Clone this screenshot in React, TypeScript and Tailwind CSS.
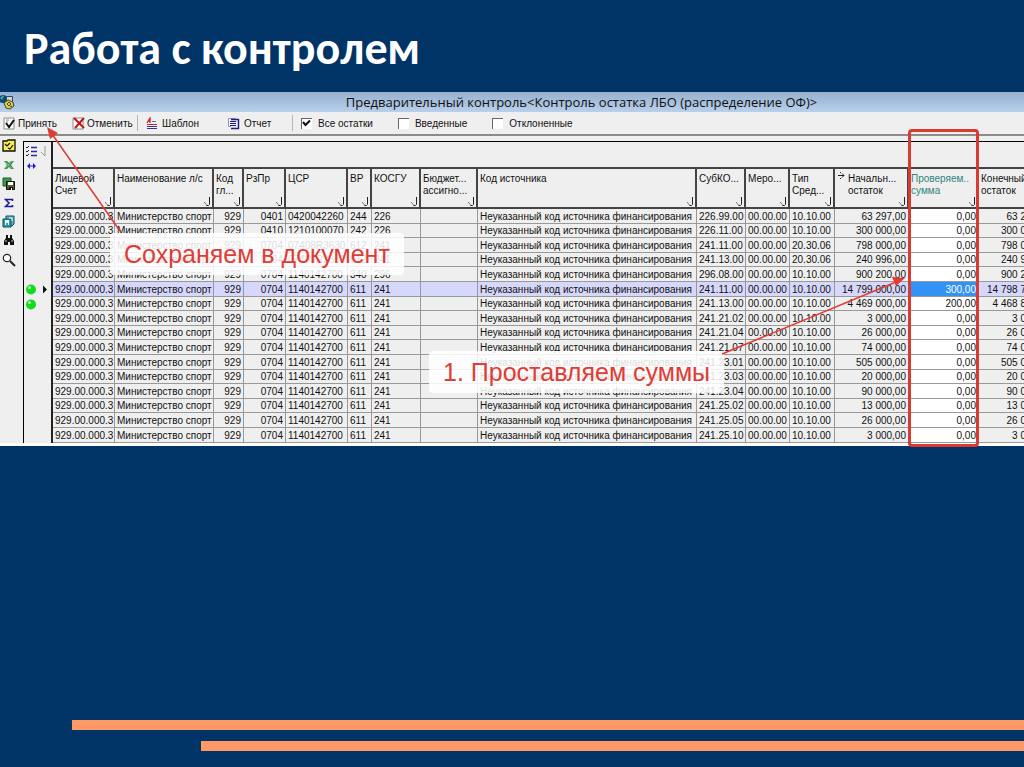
import type { ReactNode } from "react"
import clsx from "clsx"

type Column = {
  label: string[]
  width: string
  align?: "right"
  sorted?: boolean
  accent?: boolean
}

const columns: Column[] = [
  { label: ["Лицевой", "Счет"], width: "w-[62px]" },
  { label: ["Наименование л/с"], width: "w-[99px]" },
  { label: ["Код", "гл..."], width: "w-[30px]", align: "right" },
  { label: ["РзПр"], width: "w-[42px]", align: "right" },
  { label: ["ЦСР"], width: "w-[62px]" },
  { label: ["ВР"], width: "w-[24px]" },
  { label: ["КОСГУ"], width: "w-[49px]" },
  { label: ["Бюджет...", "ассигно..."], width: "w-[57px]" },
  { label: ["Код источника"], width: "w-auto" },
  { label: ["СубКО..."], width: "w-[49px]" },
  { label: ["Меро..."], width: "w-[44px]" },
  { label: ["Тип", "Сред..."], width: "w-[45px]" },
  { label: ["Начальн...", "остаток"], width: "w-[74px]", align: "right", sorted: true },
  { label: ["Проверяем..", "сумма"], width: "w-[70px]", align: "right", accent: true },
  { label: ["Конечный", "остаток"], width: "w-[75px]", align: "right" },
]

const account = "929.00.000.3"
const ministry = "Министерство спорт"
const source = "Неуказанный код источника финансирования"

// section, target item, expense type, KOSGU, sub code, fund type, opening, checked, closing
const records = [
  ["0401", "0420042260", "244", "226", "226.99.00", "10.10.00", "63 297,00", "0,00", "63 297,00"],
  ["0410", "1210100070", "242", "226", "226.11.00", "10.10.00", "300 000,00", "0,00", "300 000,00"],
  ["0704", "07408R3630", "612", "241", "241.11.00", "20.30.06", "798 000,00", "0,00", "798 000,00"],
  ["0704", "07408R3630", "612", "241", "241.13.00", "20.30.06", "240 996,00", "0,00", "240 996,00"],
  ["0704", "1140142700", "340", "296", "296.08.00", "10.10.00", "900 200,00", "0,00", "900 200,00"],
  ["0704", "1140142700", "611", "241", "241.11.00", "10.10.00", "14 799 000,00", "300,00", "14 798 700,00"],
  ["0704", "1140142700", "611", "241", "241.13.00", "10.10.00", "4 469 000,00", "200,00", "4 468 800,00"],
  ["0704", "1140142700", "611", "241", "241.21.02", "10.10.00", "3 000,00", "0,00", "3 000,00"],
  ["0704", "1140142700", "611", "241", "241.21.04", "10.10.00", "26 000,00", "0,00", "26 000,00"],
  ["0704", "1140142700", "611", "241", "241.21.07", "10.10.00", "74 000,00", "0,00", "74 000,00"],
  ["0704", "1140142700", "611", "241", "241.23.01", "10.10.00", "505 000,00", "0,00", "505 000,00"],
  ["0704", "1140142700", "611", "241", "241.23.03", "10.10.00", "20 000,00", "0,00", "20 000,00"],
  ["0704", "1140142700", "611", "241", "241.23.04", "10.10.00", "90 000,00", "0,00", "90 000,00"],
  ["0704", "1140142700", "611", "241", "241.25.02", "10.10.00", "13 000,00", "0,00", "13 000,00"],
  ["0704", "1140142700", "611", "241", "241.25.05", "10.10.00", "26 000,00", "0,00", "26 000,00"],
  ["0704", "1140142700", "611", "241", "241.25.10", "10.10.00", "3 000,00", "0,00", "3 000,00"],
]

const rows = records.map(([section, item, type, kosgu, sub, fund, opening, checked, closing]) => [
  account, ministry, "929", section, item, type, kosgu, "", source, sub, "00.00.00", fund, opening, checked, closing,
])

const SELECTED = 5

function AppIcon() {
  return (
    <svg width="15" height="16" viewBox="0 0 15 16" aria-hidden="true">
      <circle cx="3" cy="5" r="4" fill="#12427e" />
      <path d="M0 4l3-3 1 2-2 3z" fill="#2fae8b" />
      <path d="M6.500 2.500h6v7h-6z" fill="#cfd6e0" stroke="#3b4654" />
      <path d="M4 9l4-3 5 2 1 4-4 3-4-1z" fill="#d9cf4b" stroke="#4b4720" />
      <path d="M7 10l2-2 2 2-2 2zM10 13l2-1" stroke="#4b4720" fill="none" />
    </svg>
  )
}

function AcceptIcon() {
  return (
    <svg width="13" height="13" viewBox="0 0 13 13" aria-hidden="true">
      <path d="M1 1h10v11H1z" fill="#fff" stroke="#8a8a8a" />
      <path d="M3 3h3M3 5h2" stroke="#8a8a8a" />
      <path d="M3 6l3 4 5-7" fill="none" stroke="#111" strokeWidth="2" />
    </svg>
  )
}

function CancelIcon() {
  return (
    <svg width="13" height="13" viewBox="0 0 13 13" aria-hidden="true">
      <path d="M1 1h10v11H1z" fill="#fff" stroke="#8a8a8a" />
      <path d="M2 1l10 10M12 1L3 11" stroke="#c3141c" strokeWidth="2" />
    </svg>
  )
}

function TemplateIcon() {
  return (
    <svg width="12" height="13" viewBox="0 0 12 13" aria-hidden="true">
      <path d="M1 6l3-5v5M2 4h2" fill="none" stroke="#d8222a" strokeWidth="1.3" />
      <path d="M6 4.5h4" stroke="#6d6d9a" />
      <path d="M1 7.5h10" stroke="#d8222a" />
      <path d="M1 9.5h10M1 11.5h10" stroke="#3434a0" />
    </svg>
  )
}

function ReportIcon() {
  return (
    <svg width="13" height="13" viewBox="0 0 13 13" aria-hidden="true">
      <path d="M1.500 1.500h7v8h-7z" fill="#fff" stroke="#8f8fb8" />
      <path d="M4 2.500h7.500v9H4" fill="#e9e9fa" stroke="#20207c" strokeWidth="1.400" />
      <path d="M3 4.500h6M3 6.500h6M3 8.500h6" stroke="#20207c" />
    </svg>
  )
}

function ChecklistIcon() {
  return (
    <svg width="14" height="13" viewBox="0 0 14 13" aria-hidden="true">
      <path d="M1 2h4l1-1h7v11H1z" fill="#f5f04a" stroke="#111" strokeWidth="1.3" />
      <path d="M3 5l2 2 3-3M6 9l2 1 3-4" fill="none" stroke="#111" strokeWidth="1.2" />
    </svg>
  )
}

function ExcelIcon() {
  return (
    <svg width="12" height="10" viewBox="0 0 12 10" aria-hidden="true">
      <path d="M1 1h3l2 2 2-2h3L8 5l3 4H8L6 7 4 9H1l3-4z" fill="#2f8f45" />
      <path d="M2 1.500l7 7M9 1.500l-7 7" stroke="#bfe5c6" strokeWidth="0.6" />
    </svg>
  )
}

function SaveIcon() {
  return (
    <svg width="14" height="14" viewBox="0 0 14 14" aria-hidden="true">
      <path d="M1 1h8v8H1z" fill="#3b9c4c" stroke="#1c5a28" />
      <path d="M4.500 4.500h8v8h-8z" fill="#55602a" stroke="#111" />
      <path d="M6 5h5v3H6z" fill="#fff" />
      <path d="M7 10h4v3H7z" fill="#111" />
      <path d="M9 11h1v2H9z" fill="#fff" />
    </svg>
  )
}

function SumIcon() {
  return (
    <svg width="10" height="10" viewBox="0 0 10 10" aria-hidden="true">
      <path d="M8.500 3V1.500H1.500L5 5 1.500 8.500h7V7" fill="none" stroke="#1a1a96" strokeWidth="1.500" />
    </svg>
  )
}

function CopyIcon() {
  return (
    <svg width="13" height="13" viewBox="0 0 13 13" aria-hidden="true">
      <path d="M4 1h8v8l-2 2H4z" fill="#58b9c4" stroke="#134d58" />
      <path d="M1 4h8v8H1z" fill="#2f9db0" stroke="#134d58" />
      <path d="M3 5v5h1V8h2v2h1V5" fill="#e8fbff" />
      <path d="M7 3h3v3" fill="none" stroke="#e8fbff" />
    </svg>
  )
}

function FindIcon() {
  return (
    <svg width="12" height="11" viewBox="0 0 12 11" aria-hidden="true">
      <path d="M3 0h2v3h2V0h2v3l2 3v4H7V7H5v3H1V6l2-3z" fill="#111" />
      <path d="M3 5v2M9 5v2" stroke="#eee" strokeWidth="0.8" />
    </svg>
  )
}

function MagnifierIcon() {
  return (
    <svg width="14" height="14" viewBox="0 0 14 14" aria-hidden="true">
      <circle cx="5" cy="5" r="3.700" fill="#fff" stroke="#222" strokeWidth="1.200" />
      <path d="M8 8l5 5" stroke="#222" strokeWidth="2" />
    </svg>
  )
}

function FilterMark() {
  return (
    <svg width="8" height="10" viewBox="0 0 8 10" className="absolute right-px bottom-0" aria-hidden="true">
      <path d="M1 5l3 3.500" stroke="#777" fill="none" />
      <path d="M6.500 0v7.500L5.500 8.500H3.500" stroke="#222" fill="none" />
    </svg>
  )
}

function ToolButton({ icon, children, className }: { icon: ReactNode; children: ReactNode; className?: string }) {
  return (
    <button type="button" className={clsx("flex items-center gap-0.5", className)}>
      {icon}
      {children}
    </button>
  )
}

function CheckOption({ id, label, checked }: { id: string; label: string; checked?: boolean }) {
  return (
    <div className="flex items-center gap-1.5">
      <span className="relative flex h-[11px] w-[11px]">
        <input
          id={id}
          type="checkbox"
          defaultChecked={checked}
          className="peer h-[11px] w-[11px] appearance-none border-t border-l border-[#666] bg-white"
        />
        <svg
          width="9"
          height="9"
          viewBox="0 0 9 9"
          className="pointer-events-none absolute top-px left-px hidden peer-checked:block"
          aria-hidden="true"
        >
          <path d="M1 3l2.500 3L8 1.500" fill="none" stroke="#111" strokeWidth="2" />
        </svg>
      </span>
      <label htmlFor={id}>{label}</label>
    </div>
  )
}

const sideTools = [
  { label: "Отметить", icon: <ChecklistIcon /> },
  { label: "Excel", icon: <ExcelIcon /> },
  { label: "Сохранить", icon: <SaveIcon /> },
  { label: "Сумма", icon: <SumIcon /> },
  { label: "Копировать", icon: <CopyIcon /> },
  { label: "Найти", icon: <FindIcon /> },
  { label: "Просмотр", icon: <MagnifierIcon /> },
]

function Toolbar() {
  return (
    <div className="flex h-6 items-center border-b-2 border-[#8c8c8c] pl-[3px] whitespace-nowrap">
      <ToolButton icon={<AcceptIcon />} className="w-[69px]">Принять</ToolButton>
      <ToolButton icon={<CancelIcon />} className="w-[65px]">Отменить</ToolButton>
      <div className="h-4 w-px bg-[#b5b5b5]" />
      <ToolButton icon={<TemplateIcon />} className="ml-2 w-[81px] gap-1">Шаблон</ToolButton>
      <ToolButton icon={<ReportIcon />} className="w-[65px] gap-1">Отчет</ToolButton>
      <div className="mr-2 h-4 w-px bg-[#b5b5b5]" />
      <div className="flex gap-[25px]">
        <CheckOption id="all" label="Все остатки" checked />
        <CheckOption id="entered" label="Введенные" />
        <CheckOption id="rejected" label="Отклоненные" />
      </div>
    </div>
  )
}

function BalanceTable() {
  return (
    <table className="w-[calc(100%+30px)] table-fixed border-separate border-spacing-0 border-t border-l border-black">
      <colgroup>
        <col className="w-[29px]" />
        {columns.map((column) => (
          <col key={column.label[0]} className={column.width} />
        ))}
      </colgroup>
      <thead>
        <tr>
          <th rowSpan={2} className="border-r-2 border-[#222] align-top">
            <svg width="26" height="28" viewBox="0 0 26 28" className="mt-[3px] ml-px" aria-hidden="true">
              <path d="M1 2l1 1 2-2M1 6l1 1 2-2M1 10l1 1 2-2" fill="none" stroke="#222" />
              <path d="M6 2.500h6M6 6.500h6M6 10.500h6" stroke="#2a2aa8" strokeWidth="1.500" />
              <path d="M16 7l4 4V1" fill="none" stroke="#999" />
              <path d="M2 21l3-3v6zM11 21l-3-3v6z" fill="#1b1be0" />
              <path d="M4 21h5" stroke="#1b1be0" />
            </svg>
          </th>
          <th colSpan={15} className="h-[27px] border-b-2 border-[#444]" />
        </tr>
        <tr>
          {columns.map((column) => (
            <th
              key={column.label[0]}
              className={clsx(
                "relative h-10 border-r-2 border-b-2 border-[#444] pt-1 align-top leading-3 font-normal whitespace-nowrap",
                column.accent && "text-[#2f857c]",
                column.sorted ? "pl-[13px]" : "pl-0.5",
              )}
            >
              {column.sorted && (
                <svg width="7" height="7" viewBox="0 0 7 7" className="absolute top-[3px] left-[3px]" aria-hidden="true">
                  <path d="M0 3.500h6M4 1.500l2 2-2 2M2.500 0v1M2.500 6v1" fill="none" stroke="#222" />
                </svg>
              )}
              {column.label.map((line) => (
                <span key={line} className="block text-left">{line}</span>
              ))}
              <FilterMark />
            </th>
          ))}
        </tr>
      </thead>
      <tbody>
        {rows.map((row, index) => (
          <tr
            key={index}
            className={clsx(index % 5 === 1 || index % 5 === 3 ? "h-3.5" : "h-[15px]", index === SELECTED && "bg-[#d6d8fb]")}
          >
            <td className="border-r-2 border-[#222] bg-[#efefef] p-0">
              {(index === SELECTED || index === SELECTED + 1) && (
                <svg width="26" height="11" viewBox="0 0 26 11" className="block" aria-hidden="true">
                  <circle cx="7" cy="5.500" r="5" fill="#12dc1c" />
                  <circle cx="5.500" cy="3.500" r="1.500" fill="#b9ffbb" />
                  {index === SELECTED && <path d="M19 1.500l4 4-4 4z" fill="#111" />}
                </svg>
              )}
            </td>
            {row.map((value, col) => (
              <td
                key={col}
                className={clsx(
                  "overflow-hidden border-r border-b border-[#999] px-0.5 py-0 leading-[13px] whitespace-nowrap",
                  columns[col].align === "right" && "text-right",
                  col === 13 && index !== SELECTED && "bg-white",
                  col === 13 && index === SELECTED && "bg-[#3393f5] text-white",
                )}
              >
                {value}
              </td>
            ))}
          </tr>
        ))}
      </tbody>
    </table>
  )
}

function Annotations() {
  return (
    <>
      <p className="absolute top-[141px] left-[110px] rounded bg-white/85 px-3.5 py-1.5 text-[25px] leading-[30px] whitespace-nowrap text-[#e03c36]">
        Сохраняем в документ
      </p>
      <p className="absolute top-[259px] left-[429px] rounded bg-white/85 px-3.5 py-1.5 text-[25px] leading-[30px] whitespace-nowrap text-[#e03c36]">
        1. Проставляем суммы
      </p>
      <div className="absolute top-[37px] left-[908px] h-[318px] w-[71px] rounded border-3 border-[#d93a34]" />
      <svg width="1024" height="355" viewBox="0 0 1024 355" className="pointer-events-none absolute top-0 left-0" aria-hidden="true">
        <g fill="none" stroke="#e03c36" strokeWidth="1.500">
          <path d="M120 139L52 42" />
          <path d="M722 262l174-72" />
        </g>
        <path d="M47 35l11 6-8 6zM905 186l-13-1 4 9z" fill="#e03c36" />
      </svg>
    </>
  )
}

export default function App() {
  return (
    <main className="flex min-h-screen flex-col overflow-hidden bg-[#003366] font-['Liberation_Sans',Arial,sans-serif]">
      <h1 className="flex h-[92px] items-center px-6 pt-1 font-[Carlito,Lato,'Open_Sans',sans-serif] text-[46px] leading-none font-bold text-white">
        Работа с контролем
      </h1>

      <section className="relative border-b-3 border-white bg-[#efefef] text-[10px] text-[#111]">
        <header className="flex h-5 items-center bg-linear-to-b from-[#96b0cf] to-[#b8d0ea]">
          <AppIcon />
          <h2 className="flex-1 pl-[124px] text-center font-['Open_Sans','Noto_Sans',sans-serif] text-[13px] leading-5">
            Предварительный контроль&lt;Контроль остатка ЛБО (распределение ОФ)&gt;
          </h2>
        </header>
        <Toolbar />
        <div className="flex">
          <aside className="flex w-[23px] shrink-0 flex-col pr-1.5">
            {sideTools.map((tool) => (
              <button key={tool.label} type="button" aria-label={tool.label} className="flex h-[19px] items-center justify-center">
                {tool.icon}
              </button>
            ))}
          </aside>
          <div className="min-w-0 flex-1 overflow-hidden pt-[5px]">
            <BalanceTable />
          </div>
        </div>
        <Annotations />
      </section>

      <footer className="mt-auto flex flex-col gap-[11px] pb-4">
        <div className="ml-[72px] h-2.5 bg-[#ff9966]" />
        <div className="ml-[201px] h-2.5 bg-[#ff9966]" />
      </footer>
    </main>
  )
}
